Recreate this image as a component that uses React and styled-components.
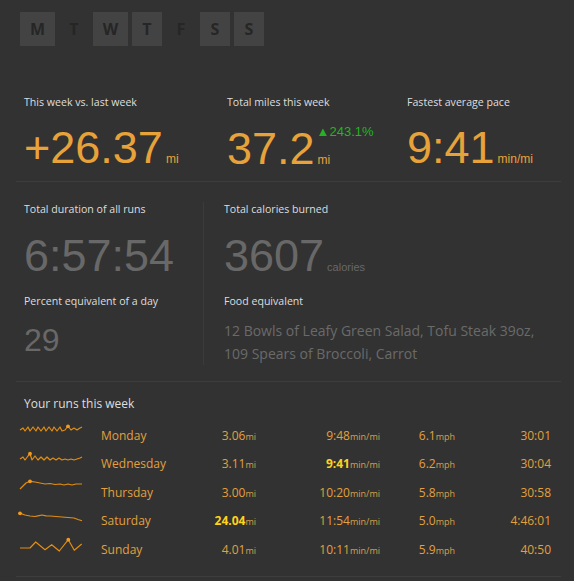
import React from 'react';
import styled, {createGlobalStyle} from 'styled-components';

const GlobalStyle = createGlobalStyle`
  html, body {
    margin: 0;
    padding: 0;
    background: #323232;
  }
  body {
    font-family: "Open Sans", "Noto Sans", sans-serif;
  }
`;

const Page = styled.div`
  width: 574px;
  min-height: 581px;
  background: #323232;
`;

const DayRow = styled.div`
  display: flex;
  gap: 3.6px;
  padding: 12px 20px 0;
`;

const Day = styled.div`
  height: 34px;
  min-width: 11px;
  padding: 0 ${props => (props.wide ? '10px' : '9.7px')};
  line-height: 34px;
  text-align: center;
  font-size: 16px;
  font-weight: 700;
  color: #262626;
  background: ${props => (props.active ? '#434343' : 'transparent')};
`;

const Section = styled.div`
  margin: 0 13px 0 16px;
  padding: ${props => props.pad};
  border-bottom: 1px solid #3d3d3d;
`;

const StatGrid = styled.div`
  display: grid;
  grid-template-columns: ${props => props.cols};
`;

const Column = styled.div`
  display: flex;
  flex-direction: column;
  padding-left: ${props => (props.divided ? '20px' : '0')};
  border-left: ${props => (props.divided ? '1px solid #3b3b3b' : 'none')};
`;

const Label = styled.div`
  font-size: 10.6px;
  line-height: 15px;
  color: #dedede;
  margin-top: ${props => props.top || '0'};
`;

const Value = styled.div`
  margin-top: ${props => props.top || '15px'};
  font-family: "Liberation Sans", Arial, sans-serif;
  font-size: ${props => props.size || '45px'};
  line-height: ${props => props.size || '45px'};
  color: ${props => (props.muted ? '#686868' : '#e8a23a')};
  white-space: nowrap;
`;

const UnitStack = styled.span`
  display: inline-block;
  margin-left: 3px;
  font-size: ${props => props.size || '12px'};
  line-height: 14px;
  vertical-align: baseline;
`;

const Delta = styled.div`
  color: #25b325;
  font-size: 13px;
  margin-bottom: 14px;
  margin-left: -1px;
`;

const FoodText = styled.div`
  margin-top: 10px;
  font-size: 14px;
  line-height: 23px;
  color: #6a6a6a;
`;

const RunsTitle = styled.div`
  padding-left: 8px;
  font-size: 12px;
  line-height: 16px;
  color: #dedede;
`;

const RunList = styled.div`
  margin-top: 9px;
  padding-left: 4px;
`;

const RunRow = styled.div`
  display: grid;
  grid-template-columns: 62px 114px 60px 124px 75px 96px;
  align-items: center;
  height: 28.5px;
  font-size: 12px;
  color: #e3a03c;

  & > :nth-child(2) {
    padding-left: 19px;
  }
`;

const Cell = styled.div`
  text-align: right;
  white-space: nowrap;
  font-weight: ${props => (props.best ? 700 : 400)};
  color: ${props => (props.best ? '#ffd21c' : 'inherit')};
`;

const Name = styled.div`
  white-space: nowrap;
`;

const Small = styled.span`
  font-size: 9px;
  font-weight: 400;
  color: #d9a04a;
`;

const Spark = ({d, dot}) => (
  <svg width="62" height="24" viewBox="0 0 62 24" style={{overflow: 'visible', display: 'block'}}>
    <path d={d} fill="none" stroke="#e28d12" strokeWidth="1.2" strokeLinejoin="round" />
    <circle cx={dot[0]} cy={dot[1]} r="1.9" fill="#f39a1a" />
  </svg>
);

const days = [
  {l: 'M', active: true, wide: true},
  {l: 'T'},
  {l: 'W', active: true, wide: true},
  {l: 'T', active: true},
  {l: 'F'},
  {l: 'S', active: true},
  {l: 'S', active: true},
];

const runs = [
  {
    day: 'Monday', dist: '3.06', pace: '9:48', speed: '6.1', time: '30:01',
    spark: 'M0,7 L3,5 L5,8 L8,4 L10,8 L13,4 L16,8 L18,4 L21,8 L24,4 L26,8 L29,4 L32,8 L34,4 L37,8 L40,4 L42,8 L45,7 L48,3 L51,7 L54,5 L57,7 L60,5 L62,4',
    dot: [48, 3.3],
  },
  {
    day: 'Wednesday', dist: '3.11', pace: '9:41', speed: '6.2', time: '30:04', bestPace: true,
    spark: 'M0,7 L3,5 L5,8 L8,4 L10,1.7 L12,8 L15,4 L18,8 L21,5 L24,8 L27,5 L30,8 L33,6 L36,8 L39,6 L42,8 L45,7 L48,8 L51,7 L54,8 L57,7 L60,6 L62,5',
    dot: [10, 1.7],
  },
  {
    day: 'Thursday', dist: '3.00', pace: '10:20', speed: '5.8', time: '30:58',
    spark: 'M0,9 L3,6 L6,3 L10,1.3 L15,2 L20,3 L25,4 L30,3.5 L35,4.5 L40,4 L44,5 L48,4 L52,5 L56,4 L62,4',
    dot: [10, 1.3],
  },
  {
    day: 'Saturday', dist: '24.04', pace: '11:54', speed: '5.0', time: '4:46:01', bestDist: true,
    spark: 'M0,4.3 L5,6 L10,7 L15,7.5 L18,6.8 L22,6 L26,6.8 L30,7 L36,7.5 L42,8 L48,8.5 L54,9 L58,10.5 L62,11.7',
    dot: [0, 4.3],
  },
  {
    day: 'Sunday', dist: '4.01', pace: '10:11', speed: '5.9', time: '40:50',
    spark: 'M0,11 L10,11 L15.7,5 L25,12.7 L31.7,7.7 L39.3,14 L48.3,2.7 L54.3,13.3 L61.7,7',
    dot: [48.3, 2.7],
  },
];

const App = () => {
  return (
    <Page>
      <GlobalStyle />
      <DayRow>
        {days.map((d, i) => (
          <Day key={i} active={d.active} wide={d.wide}>{d.l}</Day>
        ))}
      </DayRow>

      <Section pad="49px 0 10px 8px">
        <StatGrid cols="203px 180px 1fr">
          <Column>
            <Label>This week vs. last week</Label>
            <Value>+26.37<UnitStack>mi</UnitStack></Value>
          </Column>
          <Column>
            <Label>Total miles this week</Label>
            <Value>37.2<UnitStack><Delta>▲243.1%</Delta>mi</UnitStack></Value>
          </Column>
          <Column>
            <Label>Fastest average pace</Label>
            <Value>9:41<UnitStack>min/mi</UnitStack></Value>
          </Column>
        </StatGrid>
      </Section>

      <Section pad="20px 0 16px 8px">
        <StatGrid cols="179px 1fr">
          <Column>
            <Label>Total duration of all runs</Label>
            <Value muted top="16px">6:57:54</Value>
            <Label top="16px">Percent equivalent of a day</Label>
            <Value muted size="32px" top="15px">29</Value>
          </Column>
          <Column divided>
            <Label>Total calories burned</Label>
            <Value muted top="16px">3607<UnitStack size="11px">calories</UnitStack></Value>
            <Label top="16px">Food equivalent</Label>
            <FoodText>
              12 Bowls of Leafy Green Salad, Tofu Steak 39oz,<br />
              109 Spears of Broccoli, Carrot
            </FoodText>
          </Column>
        </StatGrid>
      </Section>

      <Section pad="14px 0 12px 0">
        <RunsTitle>Your runs this week</RunsTitle>
        <RunList>
          {runs.map(r => (
            <RunRow key={r.day}>
              <Spark d={r.spark} dot={r.dot} />
              <Name>{r.day}</Name>
              <Cell best={r.bestDist}>{r.dist}<Small>mi</Small></Cell>
              <Cell best={r.bestPace}>{r.pace}<Small>min/mi</Small></Cell>
              <Cell>{r.speed}<Small>mph</Small></Cell>
              <Cell>{r.time}</Cell>
            </RunRow>
          ))}
        </RunList>
      </Section>
    </Page>
  );
};

export default App;
